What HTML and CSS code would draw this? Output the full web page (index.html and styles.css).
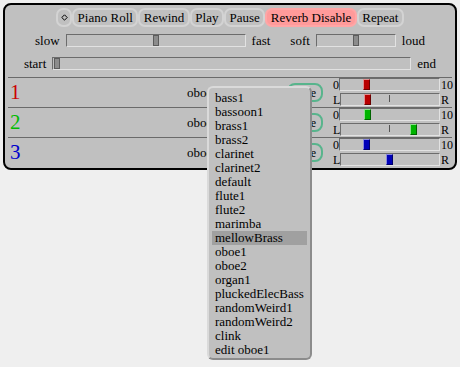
FILE: index.html
```html
<!DOCTYPE html>
<html>
<head>
<meta charset="utf-8">
<link rel="stylesheet" href="styles.css">
</head>
<body>
<div class="panel">
  <div class="toolbar">
    <div class="btn btn-icon"><svg width="7" height="7" viewBox="0 0 7 7"><path d="M3.5 0.8 L6.2 3.5 L3.5 6.2 L0.8 3.5 Z" fill="none" stroke="#000" stroke-width="1"/></svg></div>
    <div class="btn">Piano Roll</div>
    <div class="btn">Rewind</div>
    <div class="btn">Play</div>
    <div class="btn">Pause</div>
    <div class="btn btn-on">Reverb Disable</div>
    <div class="btn">Repeat</div>
  </div>
  <div class="ctl-row">
    <span class="lbl">slow</span>
    <div class="trough w-speed"><div class="thumb gray" style="left:86px"></div></div>
    <span class="lbl">fast</span>
    <span class="lbl sep">soft</span>
    <div class="trough w-vol"><div class="thumb gray" style="left:36px"></div></div>
    <span class="lbl">loud</span>
  </div>
  <div class="ctl-row row-start">
    <span class="lbl">start</span>
    <div class="trough w-pos"><div class="thumb gray" style="left:1px"></div></div>
    <span class="lbl">end</span>
  </div>
  <div class="tracks">
    <div class="track">
      <div class="num red">1</div>
      <div class="name">oboe1</div>
      <div class="mute">Mute</div>
      <div class="mix">
        <div class="mix-row"><span class="ml">0</span><div class="trough grow"><div class="thumb c-red" style="left:23px"></div></div><span class="mr">10</span></div>
        <div class="mix-row"><span class="ml">L</span><div class="trough grow"><div class="tick"></div><div class="thumb c-red" style="left:23px"></div></div><span class="mr">R</span></div>
      </div>
    </div>
    <div class="track">
      <div class="num green">2</div>
      <div class="name">oboe1</div>
      <div class="mute">Mute</div>
      <div class="mix">
        <div class="mix-row"><span class="ml">0</span><div class="trough grow"><div class="thumb c-green" style="left:24px"></div></div><span class="mr">10</span></div>
        <div class="mix-row"><span class="ml">L</span><div class="trough grow"><div class="tick"></div><div class="thumb c-green" style="left:69px"></div></div><span class="mr">R</span></div>
      </div>
    </div>
    <div class="track">
      <div class="num blue">3</div>
      <div class="name">oboe1</div>
      <div class="mute">Mute</div>
      <div class="mix">
        <div class="mix-row"><span class="ml">0</span><div class="trough grow"><div class="thumb c-blue" style="left:23px"></div></div><span class="mr">10</span></div>
        <div class="mix-row"><span class="ml">L</span><div class="trough grow"><div class="tick"></div><div class="thumb c-blue" style="left:45px"></div></div><span class="mr">R</span></div>
      </div>
    </div>
  </div>
</div>
<div class="menu">
  <div class="item">bass1</div>
  <div class="item">bassoon1</div>
  <div class="item">brass1</div>
  <div class="item">brass2</div>
  <div class="item">clarinet</div>
  <div class="item">clarinet2</div>
  <div class="item">default</div>
  <div class="item">flute1</div>
  <div class="item">flute2</div>
  <div class="item">marimba</div>
  <div class="item active">mellowBrass</div>
  <div class="item">oboe1</div>
  <div class="item">oboe2</div>
  <div class="item">organ1</div>
  <div class="item">pluckedElecBass</div>
  <div class="item">randomWeird1</div>
  <div class="item">randomWeird2</div>
  <div class="item">clink</div>
  <div class="item">edit oboe1</div>
</div>
</body>
</html>
```
FILE: styles.css
```css
html, body {
  margin: 0;
  padding: 0;
}
body {
  background: #efefef;
  font-family: "Liberation Serif", serif;
  font-size: 13px;
  color: #000;
  position: relative;
  width: 460px;
  height: 367px;
  overflow: hidden;
}
.panel {
  margin: 3px;
  width: 454px;
  height: 167px;
  box-sizing: border-box;
  border: 2px solid #000;
  border-radius: 8px;
  background: #c0c0c0;
  padding: 3px 3px 0;
  display: flex;
  flex-direction: column;
}
.toolbar {
  display: flex;
  justify-content: center;
  height: 19px;
}
.btn {
  height: 19px;
  box-sizing: border-box;
  border: 2px solid #d3d3d3;
  border-radius: 7px;
  padding: 0 3.5px;
  display: flex;
  align-items: center;
  line-height: 1;
  white-space: nowrap;
}
.btn-icon {
  padding: 0 2.5px;
}
.btn-on {
  background: #ff9a9a;
  border-color: #ffa6a6;
}
.ctl-row {
  display: flex;
  justify-content: center;
  align-items: center;
  height: 13px;
  margin-top: 7px;
  gap: 6px;
  line-height: 1;
}
.row-start {
  margin-top: 10px;
}
.lbl.sep {
  margin-left: 14px;
}
.trough {
  position: relative;
  height: 13px;
  box-sizing: border-box;
  border: 1px solid;
  border-color: #6c6c6c #e2e2e2 #e2e2e2 #6c6c6c;
}
.w-speed { width: 180px; }
.w-vol { width: 80px; }
.w-pos { width: 359px; }
.grow { flex: 1; }
.thumb {
  position: absolute;
  top: 0;
  width: 7px;
  height: 11px;
  box-sizing: border-box;
  border: 1px solid;
}
.thumb.gray {
  width: 6px;
  background: #8c8c8c;
  border-color: #5c5c5c;
}
.c-red {
  background: #b80000;
  border-color: #e29090 #6a0000 #6a0000 #e29090;
}
.c-green {
  background: #00b400;
  border-color: #8ee08e #006400 #006400 #8ee08e;
}
.c-blue {
  background: #0000b8;
  border-color: #8a8ae0 #00006a #00006a #8a8ae0;
}
.tick {
  position: absolute;
  left: 48px;
  top: 1px;
  width: 1px;
  height: 7px;
  background: #555;
}
.tracks {
  margin-top: 7px;
}
.track {
  border-top: 1px solid #6a6a6a;
  height: 30px;
  box-sizing: border-box;
  display: flex;
  align-items: center;
}
.num {
  width: 179px;
  box-sizing: border-box;
  padding-left: 2px;
  font-size: 21px;
  line-height: 1;
}
.red { color: #cc0000; }
.green { color: #00bb00; }
.blue { color: #0000cc; }
.name {
  width: 100px;
  line-height: 1;
}
.mute {
  width: 36px;
  height: 19px;
  box-sizing: border-box;
  border: 2px solid #58b48c;
  border-radius: 8px;
  display: flex;
  align-items: center;
  justify-content: flex-end;
  padding-right: 5px;
  font-size: 12px;
  line-height: 1;
}
.mix {
  margin-left: 10px;
  width: 119px;
  align-self: flex-start;
  display: flex;
  flex-direction: column;
  gap: 2px;
}
.mix-row {
  display: flex;
  align-items: center;
  height: 13px;
  font-size: 12px;
  line-height: 1;
}
.ml {
  padding-right: 0;
}
.mr {
  width: 12px;
  padding-left: 1px;
  box-sizing: border-box;
}
.menu {
  position: absolute;
  left: 207px;
  top: 86px;
  width: 105px;
  box-sizing: border-box;
  border: 2px solid;
  border-color: #dadada #8c8c8c #8c8c8c #dadada;
  border-radius: 6px;
  background: #c0c0c0;
  padding: 3px 3px 1px;
}
.item {
  height: 14px;
  line-height: 14px;
  padding-left: 3px;
  white-space: nowrap;
}
.item.active {
  background: #a0a0a0;
}
```
